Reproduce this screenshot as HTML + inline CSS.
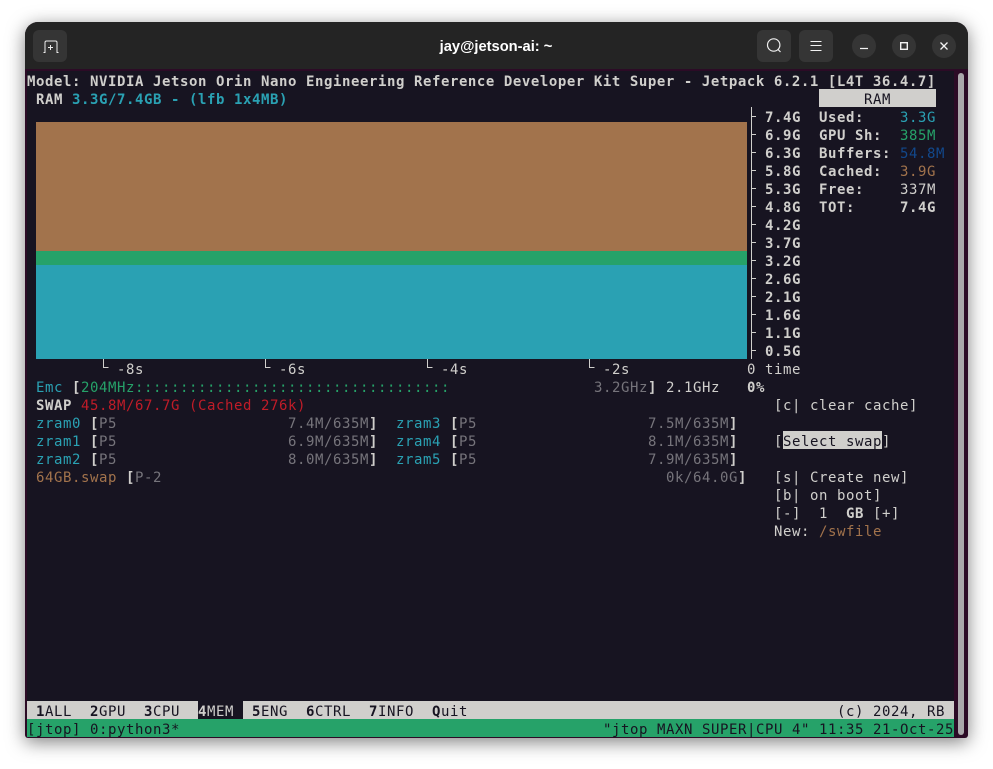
<!DOCTYPE html>
<html><head><meta charset="utf-8"><style>
html,body{margin:0;padding:0;width:993px;height:767px;background:#fff;overflow:hidden}
#w{position:absolute;left:25px;top:22px;width:943px;height:716px;border-radius:13px 13px 3px 3px;background:#2c0b26;box-shadow:0 4px 18px rgba(0,0,0,.5);overflow:hidden}
#h{position:absolute;left:0;top:0;width:943px;height:47px;background:#242424}
#t{position:absolute;left:2px;top:49px;width:927px;height:666px;background:#171421}
.btn{position:absolute;top:8px;width:34px;height:32px;background:#353535;border-radius:6px}
.c{position:absolute;top:12px;width:24px;height:24px;border-radius:50%;background:#353535}
svg{position:absolute;left:0;top:0}
#title{position:absolute;left:0;width:942px;top:16px;text-align:center;color:#fff;font:bold 14.7px/18px "Liberation Sans",sans-serif}
#a{position:absolute;left:0;top:2px;width:993px;height:767px;font:14px/18px "DejaVu Sans Mono",monospace;letter-spacing:.57px;color:#d0cfcc;white-space:pre}
#a span{position:absolute}
.b{font-weight:bold}.cy{color:#2aa1b3}.gr{color:#26a269}.bl{color:#12488b}.br{color:#a2734c}.re{color:#c01c28}.dm{color:#76747b}.dk{color:#171421}
.box{position:absolute}
</style></head><body>
<div id="w">
<div id="h">
<div class="btn" style="left:8px"><svg width="34" height="32" fill="none" stroke="#eee" stroke-width="1"><path d="M10.500 22.500h1.500V12.500q0-1.500 1.500-1.500h9q1.500 0 1.500 1.500v10h1.500M17.500 15v5M15 17.500h5"/></svg></div>
<div id="title">jay@jetson-ai: ~</div>
<div class="btn" style="left:732px"><svg width="34" height="32" fill="none" stroke="#eee" stroke-width="1.2"><circle cx="16.700" cy="15" r="6.200"/><path d="M21 19.500l2.500 2.500"/></svg></div>
<div class="btn" style="left:774px"><svg width="34" height="32" fill="none" stroke="#f2f2f2" stroke-width="1"><path d="M11.500 11.500h11M11.500 15.500h11M11.500 20.500h11"/></svg></div>
<div class="c" style="left:827px"><svg width="24" height="24" fill="none" stroke="#f2f2f2" stroke-width="1.200"><path d="M8 14.500h8"/></svg></div>
<div class="c" style="left:867px"><svg width="24" height="24" fill="none" stroke="#f2f2f2" stroke-width="1.400"><rect x="8.700" y="8.700" width="6.600" height="6.600"/></svg></div>
<div class="c" style="left:907px"><svg width="24" height="24" fill="none" stroke="#f2f2f2" stroke-width="1.300"><path d="M8.500 8.500l7 7M15.500 8.500l-7 7"/></svg></div>
</div>
<div id="t"></div>
<div class="box" style="left:933px;top:51px;width:6px;height:662px;border-radius:3px;background:#aaa8ab"></div>
</div>
<div class="box" style="left:36px;top:122px;width:711px;height:129px;background:#a2734c"></div>
<div class="box" style="left:36px;top:251px;width:711px;height:14px;background:#26a269"></div>
<div class="box" style="left:36px;top:265px;width:711px;height:94px;background:#2aa1b3"></div>
<div class="box" style="left:751px;top:107px;width:1px;height:252px;background:#d0cfcc"></div>
<svg width="993" height="767" style="pointer-events:none" fill="none" stroke="#d0cfcc" stroke-width="1"><path d="M751 116.500h5M751 134.500h5M751 152.500h5M751 170.500h5M751 188.500h5M751 206.500h5M751 224.500h5M751 242.500h5M751 260.500h5M751 278.500h5M751 296.500h5M751 314.500h5M751 332.500h5M751 350.500h5M103.500 359v8.500h5M265.500 359v8.500h5M427.500 359v8.500h5M589.500 359v8.500h5"/></svg>
<div class="box" style="left:819px;top:89px;width:117px;height:18px;background:#d0cfcc"></div>
<div class="box" style="left:783px;top:431px;width:99px;height:18px;background:#d0cfcc"></div>
<div class="box" style="left:27px;top:701px;width:927px;height:18px;background:#d0cfcc"></div>
<div class="box" style="left:198px;top:701px;width:45px;height:18px;background:#171421"></div>
<div class="box" style="left:27px;top:719px;width:927px;height:18px;background:#26a269"></div>
<div id="a">
<span class="b" style="left:27px;top:71px">Model: NVIDIA Jetson Orin Nano Engineering Reference Developer Kit Super - Jetpack 6.2.1 [L4T 36.4.7]</span>
<span class="b" style="left:36px;top:89px">RAM</span><span class="b cy" style="left:72px;top:89px">3.3G/7.4GB - (lfb 1x4MB)</span>
<span class="dk" style="left:864px;top:89px">RAM</span>
<span class="b" style="left:765px;top:107px">7.4G</span><span class="b" style="left:819px;top:107px">Used:</span><span class="cy" style="left:900px;top:107px">3.3G</span>
<span class="b" style="left:765px;top:125px">6.9G</span><span class="b" style="left:819px;top:125px">GPU Sh:</span><span class="gr" style="left:900px;top:125px">385M</span>
<span class="b" style="left:765px;top:143px">6.3G</span><span class="b" style="left:819px;top:143px">Buffers:</span><span class="bl" style="left:900px;top:143px">54.8M</span>
<span class="b" style="left:765px;top:161px">5.8G</span><span class="b" style="left:819px;top:161px">Cached:</span><span class="br" style="left:900px;top:161px">3.9G</span>
<span class="b" style="left:765px;top:179px">5.3G</span><span class="b" style="left:819px;top:179px">Free:</span><span style="left:900px;top:179px">337M</span>
<span class="b" style="left:765px;top:197px">4.8G</span><span class="b" style="left:819px;top:197px">TOT:</span><span class="b" style="left:900px;top:197px">7.4G</span>
<span class="b" style="left:765px;top:215px">4.2G</span>
<span class="b" style="left:765px;top:233px">3.7G</span>
<span class="b" style="left:765px;top:251px">3.2G</span>
<span class="b" style="left:765px;top:269px">2.6G</span>
<span class="b" style="left:765px;top:287px">2.1G</span>
<span class="b" style="left:765px;top:305px">1.6G</span>
<span class="b" style="left:765px;top:323px">1.1G</span>
<span class="b" style="left:765px;top:341px">0.5G</span>
<span style="left:117px;top:359px">-8s</span><span style="left:279px;top:359px">-6s</span><span style="left:441px;top:359px">-4s</span><span style="left:603px;top:359px">-2s</span><span style="left:747px;top:359px">0 time</span>
<span class="cy" style="left:36px;top:377px">Emc</span><span class="b" style="left:72px;top:377px">[</span><span class="gr" style="left:81px;top:377px">204MHz:::::::::::::::::::::::::::::::::::</span><span class="dm" style="left:594px;top:377px">3.2GHz</span><span class="b" style="left:648px;top:377px">]</span><span style="left:666px;top:377px">2.1GHz</span><span class="b" style="left:747px;top:377px">0%</span>
<span class="b" style="left:36px;top:395px">SWAP</span><span class="re" style="left:81px;top:395px">45.8M/67.7G (Cached 276k)</span><span style="left:774px;top:395px">[c| clear cache]</span>
<span class="cy" style="left:36px;top:413px">zram0</span><span class="b" style="left:90px;top:413px">[</span><span class="dm" style="left:99px;top:413px">P5</span><span class="dm" style="left:288px;top:413px">7.4M/635M</span><span class="b" style="left:369px;top:413px">]</span><span class="cy" style="left:396px;top:413px">zram3</span><span class="b" style="left:450px;top:413px">[</span><span class="dm" style="left:459px;top:413px">P5</span><span class="dm" style="left:648px;top:413px">7.5M/635M</span><span class="b" style="left:729px;top:413px">]</span>
<span class="cy" style="left:36px;top:431px">zram1</span><span class="b" style="left:90px;top:431px">[</span><span class="dm" style="left:99px;top:431px">P5</span><span class="dm" style="left:288px;top:431px">6.9M/635M</span><span class="b" style="left:369px;top:431px">]</span><span class="cy" style="left:396px;top:431px">zram4</span><span class="b" style="left:450px;top:431px">[</span><span class="dm" style="left:459px;top:431px">P5</span><span class="dm" style="left:648px;top:431px">8.1M/635M</span><span class="b" style="left:729px;top:431px">]</span><span style="left:774px;top:431px">[</span><span class="dk" style="left:783px;top:431px">Select swap</span><span style="left:882px;top:431px">]</span>
<span class="cy" style="left:36px;top:449px">zram2</span><span class="b" style="left:90px;top:449px">[</span><span class="dm" style="left:99px;top:449px">P5</span><span class="dm" style="left:288px;top:449px">8.0M/635M</span><span class="b" style="left:369px;top:449px">]</span><span class="cy" style="left:396px;top:449px">zram5</span><span class="b" style="left:450px;top:449px">[</span><span class="dm" style="left:459px;top:449px">P5</span><span class="dm" style="left:648px;top:449px">7.9M/635M</span><span class="b" style="left:729px;top:449px">]</span>
<span class="br" style="left:36px;top:467px">64GB.swap</span><span class="b" style="left:126px;top:467px">[</span><span class="dm" style="left:135px;top:467px">P-2</span><span class="dm" style="left:666px;top:467px">0k/64.0G</span><span class="b" style="left:738px;top:467px">]</span><span style="left:774px;top:467px">[s| Create new]</span>
<span style="left:774px;top:485px">[b| on boot]</span>
<span style="left:774px;top:503px">[-]</span><span style="left:819px;top:503px">1</span><span class="b" style="left:846px;top:503px">GB</span><span style="left:873px;top:503px">[+]</span>
<span style="left:774px;top:521px">New:</span><span class="br" style="left:819px;top:521px">/swfile</span>
<span class="dk" style="left:36px;top:701px"><b>1</b>ALL</span><span class="dk" style="left:90px;top:701px"><b>2</b>GPU</span><span class="dk" style="left:144px;top:701px"><b>3</b>CPU</span><span style="left:198px;top:701px"><b>4</b>MEM</span><span class="dk" style="left:252px;top:701px"><b>5</b>ENG</span><span class="dk" style="left:306px;top:701px"><b>6</b>CTRL</span><span class="dk" style="left:369px;top:701px"><b>7</b>INFO</span><span class="dk" style="left:432px;top:701px"><b>Q</b>uit</span><span class="dk" style="left:837px;top:701px">(c) 2024, RB</span>
<span class="dk" style="left:27px;top:719px">[jtop] 0:python3*</span><span class="dk" style="left:603px;top:719px">"jtop MAXN SUPER|CPU 4" 11:35 21-Oct-25</span>
</div>
</body></html>
